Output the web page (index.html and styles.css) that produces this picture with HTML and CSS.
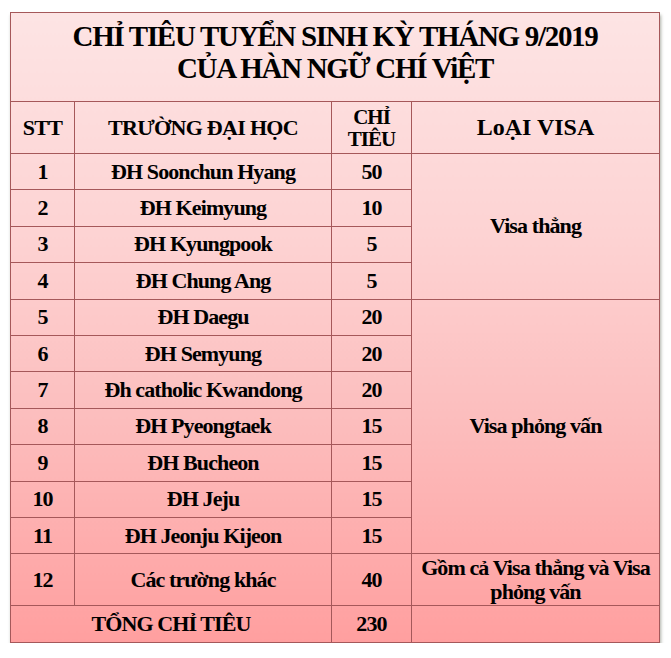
FILE: index.html
```html
<!DOCTYPE html>
<html lang="vi">
<head>
<meta charset="utf-8">
<title>Chỉ tiêu tuyển sinh</title>
<link rel="stylesheet" href="styles.css">
</head>
<body>
<table class="quota">
  <colgroup>
    <col class="c-stt">
    <col class="c-name">
    <col class="c-num">
    <col class="c-visa">
  </colgroup>
  <tr class="title-row">
    <td colspan="4" class="title">CHỈ TIÊU TUYỂN SINH KỲ THÁNG 9/2019<br>CỦA HÀN NGỮ CHÍ ViỆT</td>
  </tr>
  <tr class="head-row">
    <th>STT</th>
    <th>TRƯỜNG ĐẠI HỌC</th>
    <th class="small-head">CHỈ<br>TIÊU</th>
    <th class="visa-head">LoẠI VISA</th>
  </tr>
  <tr class="row"><td>1</td><td>ĐH Soonchun Hyang</td><td>50</td><td rowspan="4" class="visa">Visa thẳng</td></tr>
  <tr class="row"><td>2</td><td>ĐH Keimyung</td><td>10</td></tr>
  <tr class="row"><td>3</td><td>ĐH Kyungpook</td><td>5</td></tr>
  <tr class="row"><td>4</td><td>ĐH Chung Ang</td><td>5</td></tr>
  <tr class="row"><td>5</td><td>ĐH Daegu</td><td>20</td><td rowspan="7" class="visa">Visa phỏng vấn</td></tr>
  <tr class="row"><td>6</td><td>ĐH Semyung</td><td>20</td></tr>
  <tr class="row"><td>7</td><td>Đh catholic Kwandong</td><td>20</td></tr>
  <tr class="row"><td>8</td><td>ĐH Pyeongtaek</td><td>15</td></tr>
  <tr class="row"><td>9</td><td>ĐH Bucheon</td><td>15</td></tr>
  <tr class="row"><td>10</td><td>ĐH Jeju</td><td>15</td></tr>
  <tr class="row"><td>11</td><td>ĐH Jeonju Kijeon</td><td>15</td></tr>
  <tr class="row tall"><td>12</td><td>Các trường khác</td><td>40</td><td class="visa">Gồm cả Visa thẳng và Visa phỏng vấn</td></tr>
  <tr class="row total"><td colspan="2">TỔNG CHỈ TIÊU</td><td>230</td><td></td></tr>
</table>
</body>
</html>
```
FILE: styles.css
```css
html, body {
  margin: 0;
  padding: 0;
  background: #ffffff;
}
body {
  padding: 12px 0 0 10px;
  font-family: "Liberation Serif", "Times New Roman", serif;
  color: #000;
}
.quota {
  border-collapse: collapse;
  table-layout: fixed;
  width: 649px;
  font-family: "Liberation Serif", "Times New Roman", serif;
  background: linear-gradient(to bottom, #fde4e4 0%, #fdd3d3 35%, #fcbdbd 65%, #ff9f9f 100%);
  box-shadow: 1px 3px 3px rgba(70, 80, 60, 0.45);
  font-weight: bold;
}
.c-stt { width: 64px; }
.c-name { width: 257px; }
.c-num { width: 80px; }
.c-visa { width: 248px; }
.quota td, .quota th {
  border: 1px solid #a5585a;
  text-align: center;
  vertical-align: middle;
  padding: 0;
  font-family: inherit;
  font-weight: bold;
  font-size: 22px;
  letter-spacing: -0.9px;
}
.title-row td {
  height: 78px;
  font-size: 29px;
  line-height: 32px;
  letter-spacing: -1.3px;
  padding: 0 0 10px 0;
}
.head-row th {
  height: 51px;
  font-size: 22px;
  letter-spacing: -0.7px;
}
.head-row .small-head {
  line-height: 22px;
  font-size: 21px;
  letter-spacing: -1px;
}
.head-row .visa-head {
  font-size: 24px;
  letter-spacing: 0;
}
.row td {
  height: 35.4px;
}
.row.tall td {
  height: 51px;
}
.row .visa {
  line-height: 24px;
  padding: 0 6px;
}
.row.total td {
  height: 36px;
}
```
